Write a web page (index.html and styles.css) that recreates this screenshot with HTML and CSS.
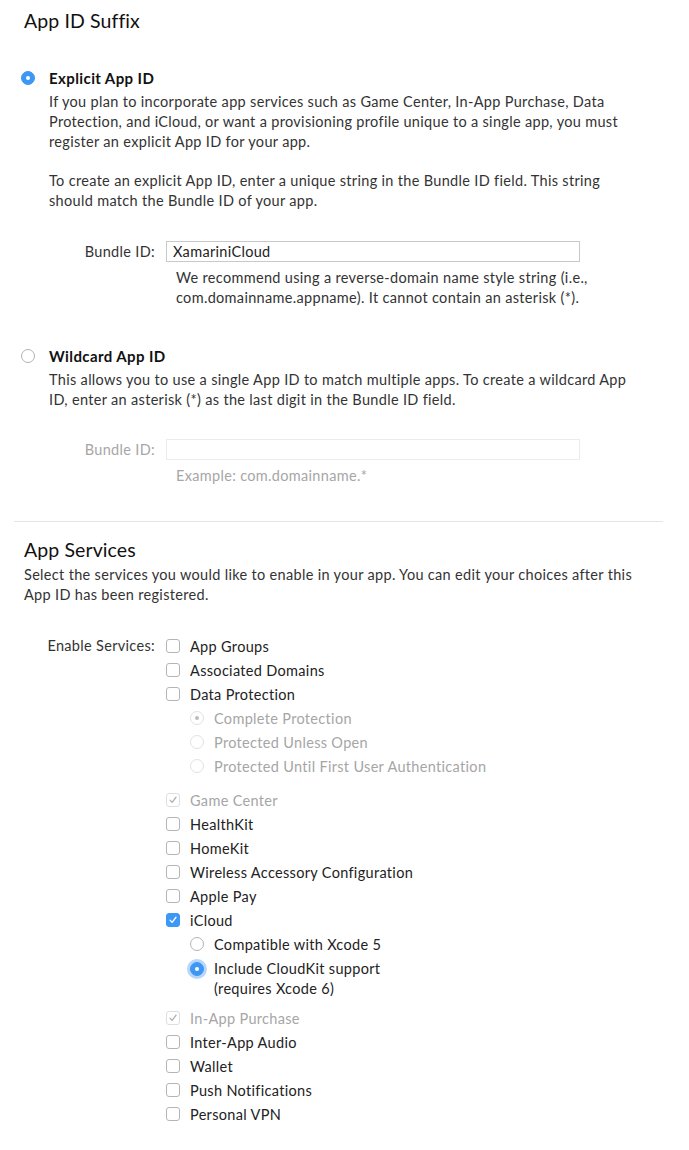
FILE: index.html
```html
<!DOCTYPE html>
<html>
<head>
<meta charset="utf-8">
<link rel="stylesheet" href="styles.css">
</head>
<body>
<div class="page">
  <section class="section first">
    <h2 class="title">App ID Suffix</h2>

    <div class="option">
      <span class="radio on"></span>
      <div class="option-body">
        <div class="option-label">Explicit App ID</div>
        <p class="desc">If you plan to incorporate app services such as Game Center, In-App Purchase, Data Protection, and iCloud, or want a provisioning profile unique to a single app, you must register an explicit App ID for your app.</p>
        <p class="desc">To create an explicit App ID, enter a unique string in the Bundle ID field. This string should match the Bundle ID of your app.</p>
      </div>
    </div>
    <div class="field field-1">
      <label class="field-label">Bundle ID:</label>
      <div class="field-ctrl">
        <div class="input">XamariniCloud</div>
        <p class="help">We recommend using a reverse-domain name style string (i.e., com.domainname.appname). It cannot contain an asterisk (*).</p>
      </div>
    </div>

    <div class="option option-2">
      <span class="radio"></span>
      <div class="option-body">
        <div class="option-label">Wildcard App ID</div>
        <p class="desc">This allows you to use a single App ID to match multiple apps. To create a wildcard App ID, enter an asterisk (*) as the last digit in the Bundle ID field.</p>
      </div>
    </div>
    <div class="field field-2 disabled">
      <label class="field-label">Bundle ID:</label>
      <div class="field-ctrl">
        <div class="input"></div>
        <p class="help">Example: com.domainname.*</p>
      </div>
    </div>
  </section>

  <section class="section second">
    <h2 class="title">App Services</h2>
    <p class="intro">Select the services you would like to enable in your app. You can edit your choices after this App ID has been registered.</p>

    <div class="field services">
      <label class="field-label">Enable Services:</label>
      <ul class="list">
        <li class="item"><span class="cb"></span>App Groups</li>
        <li class="item"><span class="cb"></span>Associated Domains</li>
        <li class="item"><span class="cb"></span>Data Protection</li>
        <li class="sub">
          <ul class="sublist disabled">
            <li class="item"><span class="radio sm dis-on"></span>Complete Protection</li>
            <li class="item"><span class="radio sm dis"></span>Protected Unless Open</li>
            <li class="item"><span class="radio sm dis"></span>Protected Until First User Authentication</li>
          </ul>
        </li>
        <li class="item disabled"><span class="cb dis-checked"><svg viewBox="0 0 14 14"><polyline points="3.5,7.2 6,9.8 10.5,3.8"/></svg></span>Game Center</li>
        <li class="item"><span class="cb"></span>HealthKit</li>
        <li class="item"><span class="cb"></span>HomeKit</li>
        <li class="item"><span class="cb"></span>Wireless Accessory Configuration</li>
        <li class="item"><span class="cb"></span>Apple Pay</li>
        <li class="item"><span class="cb checked"><svg viewBox="0 0 14 14"><polyline points="3.5,7.2 6,9.8 10.5,3.8"/></svg></span>iCloud</li>
        <li class="sub">
          <ul class="sublist">
            <li class="item"><span class="radio sm"></span>Compatible with Xcode 5</li>
            <li class="item multi"><span class="radio sm on focus"></span><span>Include CloudKit support<br>(requires Xcode 6)</span></li>
          </ul>
        </li>
        <li class="item disabled"><span class="cb dis-checked"><svg viewBox="0 0 14 14"><polyline points="3.5,7.2 6,9.8 10.5,3.8"/></svg></span>In-App Purchase</li>
        <li class="item"><span class="cb"></span>Inter-App Audio</li>
        <li class="item"><span class="cb"></span>Wallet</li>
        <li class="item"><span class="cb"></span>Push Notifications</li>
        <li class="item"><span class="cb"></span>Personal VPN</li>
      </ul>
    </div>
  </section>
</div>
</body>
</html>
```

FILE: styles.css
```css
html, body {
  margin: 0;
  padding: 0;
  background: #fff;
}
body {
  font-family: "Lato", "Open Sans", sans-serif;
  font-size: 14.5px;
  letter-spacing: 0.32px;
  color: #333;
}
.page {
  width: 649px;
  margin-left: 14px;
}
.section {
  padding: 0 10px;
}
.section.first {
  padding-top: 9px;
  padding-bottom: 35px;
  border-bottom: 1px solid #e5e5e5;
}
.section.second {
  padding-top: 16px;
}
.title {
  margin: 0;
  font-size: 19.5px;
  font-weight: normal;
  letter-spacing: 0.1px;
  line-height: 24px;
  color: #111;
}
p {
  margin: 0;
}
.option {
  display: flex;
  margin-top: 35px;
  margin-left: -3px;
}
.option-2 {
  margin-top: 38px;
}
.option .radio {
  margin-top: 3px;
  margin-right: 14px;
}
.option-body {
  flex: 1;
  padding-right: 12px;
}
.option-label {
  font-weight: bold;
  font-size: 15px;
  letter-spacing: 0.4px;
  line-height: 20px;
  color: #111;
}
.desc {
  line-height: 20px;
  margin-top: 4px;
}
.desc + .desc {
  margin-top: 19px;
}
.radio {
  display: inline-block;
  box-sizing: border-box;
  width: 14px;
  height: 14px;
  border-radius: 50%;
  border: 1px solid #b3b3b3;
  background: #fff;
  flex: none;
  position: relative;
}
.radio.on {
  background: #3d97f5;
  border-color: #3d97f5;
}
.radio.on::after {
  content: "";
  position: absolute;
  left: 4px;
  top: 4px;
  width: 4px;
  height: 4px;
  border-radius: 50%;
  background: #fff;
}
.radio.focus {
  box-shadow: 0 0 0 3px rgba(95, 165, 245, 0.45);
}
.radio.dis {
  border-color: #e2e2e2;
}
.radio.dis-on {
  border-color: #e2e2e2;
}
.radio.dis-on::after {
  content: "";
  position: absolute;
  left: 4px;
  top: 4px;
  width: 4px;
  height: 4px;
  border-radius: 50%;
  background: #bdbdbd;
}
.field {
  display: grid;
  grid-template-columns: 131px 1fr;
  column-gap: 11px;
}
.field-1 {
  margin-top: 30px;
}
.field-2 {
  margin-top: 29px;
}
.field-label {
  text-align: right;
  line-height: 21px;
  color: #333;
}
.field-ctrl {
  min-width: 0;
}
.input {
  box-sizing: border-box;
  width: 414px;
  height: 21px;
  border: 1px solid #c9c9c9;
  padding: 0 6px;
  line-height: 19px;
  color: #222;
}
.help {
  margin-top: 6px;
  padding-left: 10px;
  line-height: 20px;
  width: 440px;
}
.field.disabled .field-label,
.field.disabled .help {
  color: #a6a6a6;
}
.field.disabled .input {
  border-color: #ececec;
}
.intro {
  margin-top: 3px;
  line-height: 20px;
}
.services {
  margin-top: 29px;
}
.services .field-label {
  line-height: 24px;
}
.list, .sublist {
  list-style: none;
  margin: 0;
  padding: 0;
}
.item {
  display: flex;
  align-items: center;
  height: 24px;
  color: #222;
}
.sub {
  padding-left: 24px;
  margin-bottom: 10px;
}
.sublist.disabled .item,
.item.disabled {
  color: #a6a6a6;
}
.item.multi {
  box-sizing: border-box;
  height: 40px;
  align-items: flex-start;
  line-height: 20px;
  padding-top: 3px;
}
.item.multi .radio {
  margin-top: 3px;
}
.item .radio, .item .cb {
  margin-right: 10px;
}
.cb {
  display: inline-flex;
  box-sizing: border-box;
  width: 14px;
  height: 14px;
  border-radius: 3px;
  border: 1px solid #b5b5b5;
  background: #fff;
  flex: none;
}
.cb svg {
  width: 12px;
  height: 12px;
}
.cb polyline {
  fill: none;
  stroke-width: 1.5;
  stroke-linecap: round;
  stroke-linejoin: round;
}
.cb.checked {
  background: #3d97f5;
  border-color: #3d97f5;
}
.cb.checked polyline {
  stroke: #fff;
}
.cb.dis-checked {
  border-color: #dedede;
}
.cb.dis-checked polyline {
  stroke: #b0b0b0;
}
```
